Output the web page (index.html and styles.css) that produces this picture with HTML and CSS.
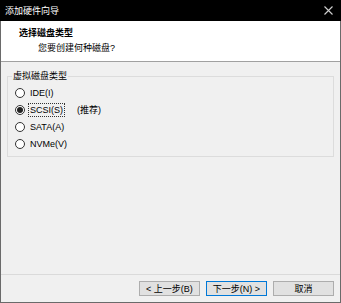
FILE: index.html
```html
<!DOCTYPE html>
<html lang="zh-CN">
<head>
    <meta charset="UTF-8">
    <meta name="viewport" content="width=device-width, initial-scale=1.0">
    <title>添加硬件向导</title>
    <link rel="stylesheet" href="styles.css">
</head>
<body>
    <div class="window">
        <div class="titlebar">
            <span class="titleText">添加硬件向导</span>
            <svg class="closeIcon" width="9" height="9" viewBox="0 0 9 9">
                <path d="M0.5 0.5 L8.5 8.5 M8.5 0.5 L0.5 8.5" stroke="#d0d0d0" stroke-width="1.1" fill="none"/>
            </svg>
        </div>

        <div class="frame">
            <div class="header">
                <div class="heading">选择磁盘类型</div>
                <div class="subheading">您要创建何种磁盘?</div>
            </div>

            <div class="content">
                <fieldset class="groupBox">
                    <legend>虚拟磁盘类型</legend>
                    <div class="options">
                        <div class="option">
                            <span class="radio"></span>
                            <span class="label">IDE(I)</span>
                        </div>
                        <div class="option">
                            <span class="radio checked"></span>
                            <span class="label focused">SCSI(S)</span>
                            <span class="note">(推荐)</span>
                        </div>
                        <div class="option">
                            <span class="radio"></span>
                            <span class="label">SATA(A)</span>
                        </div>
                        <div class="option">
                            <span class="radio"></span>
                            <span class="label">NVMe(V)</span>
                        </div>
                    </div>
                </fieldset>
            </div>

            <div class="footer">
                <button class="btn">&lt; 上一步(B)</button>
                <button class="btn default">下一步(N) &gt;</button>
                <button class="btn">取消</button>
            </div>
        </div>
    </div>
</body>
</html>
```

FILE: styles.css
```css
* {
    box-sizing: border-box;
}

body {
    margin: 0;
    font-family: "Liberation Sans", "Noto Sans CJK SC", sans-serif;
    font-size: 9px;
    color: #000;
}

.window {
    width: 341px;
    height: 303px;
    display: flex;
    flex-direction: column;
}

.titlebar {
    height: 21px;
    background-color: #000;
    color: #fff;
    display: flex;
    align-items: center;
    justify-content: space-between;
    padding: 0 8px 0 5px;
}

.titleText {
    font-size: 9px;
}

.frame {
    flex: 1;
    display: flex;
    flex-direction: column;
    border: 1px solid #6a6a6a;
    border-top: none;
    background-color: #f0f0f0;
}

.header {
    height: 41px;
    background-color: #fff;
    border-bottom: 1px solid #a0a0a0;
    padding: 6px 0 0 18px;
}

.heading {
    font-weight: bold;
    line-height: 13px;
}

.subheading {
    line-height: 13px;
    margin-top: 2px;
    padding-left: 19px;
}

.content {
    flex: 1;
    padding: 8px 6px 0 6px;
}

.groupBox {
    margin: 0;
    padding: 0 0 4px 4px;
    border: 1px solid #dcdcdc;
}

.groupBox legend {
    padding: 0 1px;
    line-height: 12px;
}

.options {
    padding: 2px 0 0 3px;
}

.option {
    height: 17px;
    display: flex;
    align-items: center;
}

.radio {
    width: 10px;
    height: 10px;
    border: 1px solid #333;
    border-radius: 50%;
    background-color: #fff;
    margin-right: 3px;
    display: flex;
    align-items: center;
    justify-content: center;
}

.radio.checked::after {
    content: "";
    width: 6px;
    height: 6px;
    border-radius: 50%;
    background-color: #222;
}

.label {
    padding: 0 1px;
    line-height: 12px;
    border: 1px dotted transparent;
}

.label.focused {
    border-color: #333;
}

.note {
    margin-left: 12px;
}

.footer {
    border-top: 1px solid #dadada;
    display: flex;
    justify-content: flex-end;
    gap: 6px;
    padding: 6px 6px 6px 0;
}

.btn {
    width: 61px;
    height: 15px;
    padding: 0;
    font-family: inherit;
    font-size: 9px;
    color: #000;
    background-color: #e1e1e1;
    border: 1px solid #adadad;
}

.btn.default {
    border-color: #0078d7;
}
```
